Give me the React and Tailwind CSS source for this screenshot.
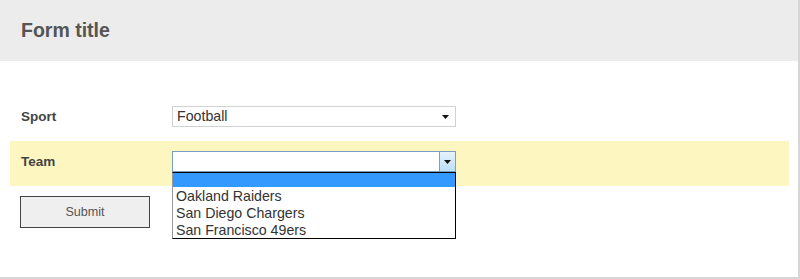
import React from "react";

const teams = ["Oakland Raiders", "San Diego Chargers", "San Francisco 49ers"];

const Arrow = () => (
  <svg width="7" height="4" viewBox="0 0 7 4" className="block">
    <path d="M0 0h7L3.5 4z" fill="#111" />
  </svg>
);

export default function App() {
  return (
    <div
      className="w-[800px] h-[279px] bg-white border-r-2 border-b-2 border-[#d6d6d6] text-[#444]"
      style={{ fontFamily: '"Liberation Sans", Arial, sans-serif' }}
    >
      {/* HEADER */}
      <div className="h-[61px] bg-[#ececec] flex items-center px-[21px]">
        <h2 className="text-[19.5px] font-bold text-[#555]">Form title</h2>
      </div>

      {/* BODY */}
      <div className="pt-[35px] pl-[10px] pr-[9px]">
        {/* SPORT */}
        <div className="h-[45px] flex items-start pt-[10px] px-[11px]">
          <label className="w-[151px] text-[13.5px] leading-[21px] font-bold">Sport</label>
          <div className="w-[284px] h-[21px] border border-[#d2d2d2] bg-white flex items-center justify-between pl-[4px] pr-[6px]">
            <span className="text-[14.2px] text-[#333]">Football</span>
            <Arrow />
          </div>
        </div>

        {/* TEAM */}
        <div className="h-[45px] flex items-start pt-[10px] px-[11px] bg-[#fdf6c1]">
          <label className="w-[151px] text-[13.5px] leading-[21px] font-bold">Team</label>
          <div className="relative">
            <div className="w-[284px] h-[21px] border border-[#7a9ec2] bg-white flex justify-end">
              <div className="w-[16px] h-full border-l border-[#7a9ec2] bg-gradient-to-b from-[#e6f3fc] to-[#bcdff7] flex items-center justify-center">
                <Arrow />
              </div>
            </div>
            {/* open list */}
            <div className="absolute left-0 top-[21px] w-[284px] bg-white border border-black border-l-[#999] z-10">
              <div className="h-[14px] bg-[#3399ff]" />
              {teams.map((t) => (
                <div key={t} className="h-[17px] pt-[1px] leading-[16px] pl-[3px] text-[14.2px] text-[#333]">
                  {t}
                </div>
              ))}
            </div>
          </div>
        </div>

        {/* SUBMIT */}
        <div className="pt-[10px] pl-[10px]">
          <button className="w-[130px] h-[32px] bg-[#efefef] border border-[#444] text-[12.6px] text-[#555]">
            Submit
          </button>
        </div>
      </div>
    </div>
  );
}
